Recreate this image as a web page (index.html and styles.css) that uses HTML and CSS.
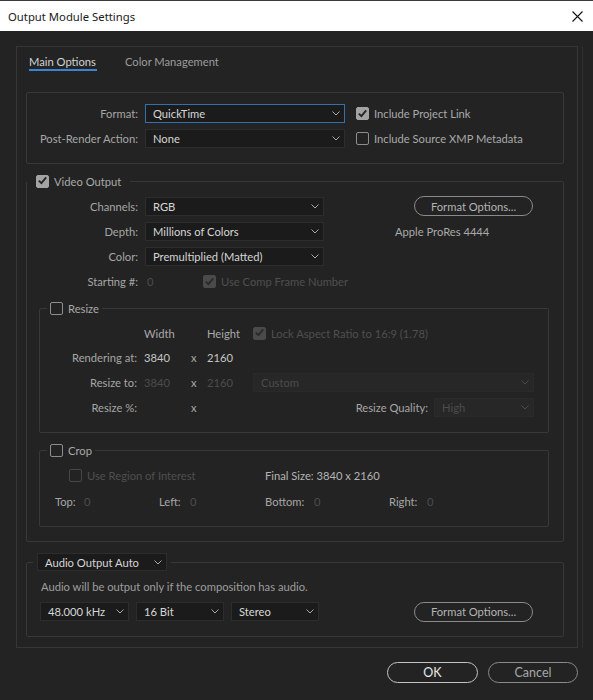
FILE: index.html
```html
<!DOCTYPE html>
<html>
<head>
<meta charset="utf-8">
<link rel="stylesheet" href="styles.css">
</head>
<body>
<div class="titlebar">
  <span class="title">Output Module Settings</span>
  <svg class="close" width="11" height="11" viewBox="0 0 11 11"><path d="M0.5 0.5 L10.5 10.5 M10.5 0.5 L0.5 10.5" stroke="#111" stroke-width="1.1" fill="none"/></svg>
</div>
<div class="main">
  <div class="frame">
    <div class="panel">
      <div class="tabs">
        <span class="tab active">Main Options</span>
        <span class="tab">Color Management</span>
      </div>

      <div class="group fmt">
        <div class="row">
          <span class="lbl">Format:</span>
          <div class="dd w200 focus"><span>QuickTime</span><svg width="8" height="5" viewBox="0 0 8 5"><polyline points="0.5,0.5 4,4 7.5,0.5" fill="none" stroke="#a8a8a8" stroke-width="1"/></svg></div>
          <span class="cb on ml11"><svg width="13" height="13" viewBox="0 0 13 13"><polyline points="2.8,6.6 5.4,9.2 10.2,3.4" fill="none" stroke="#262626" stroke-width="1.9"/></svg></span>
          <span class="cbtext">Include Project Link</span>
        </div>
        <div class="row">
          <span class="lbl">Post-Render Action:</span>
          <div class="dd w200"><span>None</span><svg width="8" height="5" viewBox="0 0 8 5"><polyline points="0.5,0.5 4,4 7.5,0.5" fill="none" stroke="#a8a8a8" stroke-width="1"/></svg></div>
          <span class="cb ml11"></span>
          <span class="cbtext">Include Source XMP Metadata</span>
        </div>
      </div>

      <fieldset class="group video">
        <legend class="lg-video"><span class="cb on"><svg width="13" height="13" viewBox="0 0 13 13"><polyline points="2.8,6.6 5.4,9.2 10.2,3.4" fill="none" stroke="#262626" stroke-width="1.9"/></svg></span><span class="cbtext">Video Output</span></legend>
        <div class="vcontent">
          <div class="row">
            <span class="lbl">Channels:</span>
            <div class="dd w179"><span>RGB</span><svg width="8" height="5" viewBox="0 0 8 5"><polyline points="0.5,0.5 4,4 7.5,0.5" fill="none" stroke="#a8a8a8" stroke-width="1"/></svg></div>
            <div class="rcell"><span class="pill fo">Format Options...</span></div>
          </div>
          <div class="row">
            <span class="lbl">Depth:</span>
            <div class="dd w179"><span>Millions of Colors</span><svg width="8" height="5" viewBox="0 0 8 5"><polyline points="0.5,0.5 4,4 7.5,0.5" fill="none" stroke="#a8a8a8" stroke-width="1"/></svg></div>
            <div class="rcell codec">Apple ProRes 4444</div>
          </div>
          <div class="row">
            <span class="lbl">Color:</span>
            <div class="dd w179"><span>Premultiplied (Matted)</span><svg width="8" height="5" viewBox="0 0 8 5"><polyline points="0.5,0.5 4,4 7.5,0.5" fill="none" stroke="#a8a8a8" stroke-width="1"/></svg></div>
          </div>
          <div class="row">
            <span class="lbl">Starting #:</span>
            <span class="dimval startnum">0</span>
            <span class="cb on dim"><svg width="13" height="13" viewBox="0 0 13 13"><polyline points="2.8,6.6 5.4,9.2 10.2,3.4" fill="none" stroke="#2a2a2a" stroke-width="1.9"/></svg></span>
            <span class="cbtext dimtext">Use Comp Frame Number</span>
          </div>

          <fieldset class="sub resize">
            <legend class="lg-sub"><span class="cb"></span><span class="cbtext">Resize</span></legend>
            <div class="rcontent">
              <div class="row hdr">
                <span class="lbl rl"></span>
                <span class="cw">Width</span>
                <span class="cx"></span>
                <span class="ch">Height</span>
                <span class="cb on dim"><svg width="13" height="13" viewBox="0 0 13 13"><polyline points="2.8,6.6 5.4,9.2 10.2,3.4" fill="none" stroke="#2a2a2a" stroke-width="1.9"/></svg></span>
                <span class="cbtext dimtext">Lock Aspect Ratio to 16:9 (1.78)</span>
              </div>
              <div class="row">
                <span class="lbl rl">Rendering at:</span>
                <span class="cw val">3840</span>
                <span class="cx">x</span>
                <span class="ch val">2160</span>
              </div>
              <div class="row">
                <span class="lbl rl">Resize to:</span>
                <span class="cw dimval">3840</span>
                <span class="cx">x</span>
                <span class="ch dimval">2160</span>
                <div class="dd dis grow"><span>Custom</span><svg width="8" height="5" viewBox="0 0 8 5"><polyline points="0.5,0.5 4,4 7.5,0.5" fill="none" stroke="#4a4a4a" stroke-width="1"/></svg></div>
              </div>
              <div class="row">
                <span class="lbl rl">Resize %:</span>
                <span class="cw"></span>
                <span class="cx">x</span>
                <span class="ch"></span>
                <span class="rq">Resize Quality:</span>
                <div class="dd dis w100"><span>High</span><svg width="8" height="5" viewBox="0 0 8 5"><polyline points="0.5,0.5 4,4 7.5,0.5" fill="none" stroke="#4a4a4a" stroke-width="1"/></svg></div>
              </div>
            </div>
          </fieldset>

          <fieldset class="sub crop">
            <legend class="lg-sub"><span class="cb"></span><span class="cbtext">Crop</span></legend>
            <div class="ccontent">
              <div class="row roi">
                <div class="roiitem"><span class="cb dim"></span><span class="cbtext dimtext">Use Region of Interest</span></div>
                <span class="val2">Final Size: 3840 x 2160</span>
              </div>
              <div class="row edges">
                <div class="edge e-top"><span class="el">Top:</span><span class="dimval">0</span></div>
                <div class="edge e-left"><span class="el">Left:</span><span class="dimval">0</span></div>
                <div class="edge e-bottom"><span class="el">Bottom:</span><span class="dimval">0</span></div>
                <div class="edge e-right"><span class="el">Right:</span><span class="dimval">0</span></div>
              </div>
            </div>
          </fieldset>
        </div>
      </fieldset>

      <fieldset class="group audio">
        <legend class="lg-audio"><div class="dd w130 h18"><span>Audio Output Auto</span><svg width="8" height="5" viewBox="0 0 8 5"><polyline points="0.5,0.5 4,4 7.5,0.5" fill="none" stroke="#a8a8a8" stroke-width="1"/></svg></div></legend>
        <div class="acontent">
          <div class="anote">Audio will be output only if the composition has audio.</div>
          <div class="row arow">
            <div class="dd w89"><span>48.000 kHz</span><svg width="8" height="5" viewBox="0 0 8 5"><polyline points="0.5,0.5 4,4 7.5,0.5" fill="none" stroke="#a8a8a8" stroke-width="1"/></svg></div>
            <div class="dd w88"><span>16 Bit</span><svg width="8" height="5" viewBox="0 0 8 5"><polyline points="0.5,0.5 4,4 7.5,0.5" fill="none" stroke="#a8a8a8" stroke-width="1"/></svg></div>
            <div class="dd w88"><span>Stereo</span><svg width="8" height="5" viewBox="0 0 8 5"><polyline points="0.5,0.5 4,4 7.5,0.5" fill="none" stroke="#a8a8a8" stroke-width="1"/></svg></div>
            <span class="pill afo">Format Options...</span>
          </div>
        </div>
      </fieldset>
    </div>
  </div>
  <div class="buttons">
    <span class="btn ok">OK</span>
    <span class="btn cancel">Cancel</span>
  </div>
</div>
</body>
</html>
```

FILE: styles.css
```css
* { box-sizing: border-box; }

html, body {
  margin: 0;
  padding: 0;
}

body {
  width: 593px;
  height: 700px;
  overflow: hidden;
  background: #232323;
  font-family: Lato, "Liberation Sans", sans-serif;
  font-size: 11.2px;
  line-height: 15px;
  color: #a9a9a9;
}

.titlebar {
  height: 31px;
  background: #ffffff;
  border-top: 1px solid #3a3a3a;
  display: flex;
  align-items: center;
  justify-content: space-between;
  padding: 0 10px 0 8px;
}

.title {
  font-family: "Noto Sans", "Open Sans", sans-serif;
  font-size: 11.3px;
  color: #1a1a1a;
}

.main {
  padding-top: 15px;
}

.frame {
  margin-left: 16px;
  width: 567px;
  padding-right: 4px;
  border-right: 1px solid #2f2f2f;
}

.panel {
  border: 1px solid #363636;
  padding: 7px 13px 10px 9px;
}

.tabs {
  display: flex;
  gap: 28px;
  margin-left: 3px;
}

.tab {
  line-height: 15px;
  border-bottom: 2px solid transparent;
  color: #9c9c9c;
}

.tab.active {
  color: #d2d2d2;
  border-bottom-color: #3a82d2;
  padding-right: 1px;
}

.group {
  border: 1px solid #383838;
  border-radius: 2px;
}

.fmt {
  margin-top: 21px;
  padding: 11px 0 15px 0;
}

.row {
  display: flex;
  align-items: center;
  height: 19px;
}

.row + .row {
  margin-top: 6px;
}

.lbl {
  flex: none;
  width: 111px;
  margin-right: 7px;
  text-align: right;
  white-space: nowrap;
  color: #a6a6a6;
}

.lbl.rl {
  width: 97px;
}

.dd {
  flex: none;
  display: flex;
  align-items: center;
  justify-content: space-between;
  height: 19px;
  background: #1b1b1b;
  border: 1px solid #2d2d2d;
  padding: 0 4px 0 7px;
  color: #d6d6d6;
  white-space: nowrap;
}

.dd.focus {
  border-color: #3570ab;
}

.dd.dis {
  background: #272727;
  border-color: #2a2a2a;
  color: #4c4c4c;
}

.dd.grow {
  flex: 1;
}

.w200 { width: 200px; }
.w179 { width: 179px; }
.w130 { width: 130px; }
.w100 { width: 100px; }
.w89 { width: 89px; }
.w88 { width: 88px; }
.h18 { height: 18px; }

.cb {
  flex: none;
  display: inline-block;
  width: 13px;
  height: 13px;
  border: 1.5px solid #8d8d8d;
  border-radius: 2px;
}

.cb svg {
  display: block;
  margin: -1.5px;
}

.cb.on {
  background: #a3a3a3;
  border-color: #a3a3a3;
}

.cb.dim {
  border-color: #474747;
}

.cb.on.dim {
  background: #4a4a4a;
  border-color: #4a4a4a;
}

.ml11 {
  margin-left: 11px;
}

.cbtext {
  margin-left: 5px;
  white-space: nowrap;
  color: #a9a9a9;
}

.dimtext {
  color: #4f4f4f;
}

.dimval {
  color: #4c4c4c;
}

.val {
  color: #c6c6c6;
}

.val2 {
  color: #b4b4b4;
}

/* Fieldsets */
fieldset {
  margin: 0;
  padding: 0;
  min-width: 0;
}

legend {
  padding: 0;
}

.video {
  margin-top: 9px;
}

.lg-video {
  display: flex;
  align-items: center;
  height: 16px;
  padding: 0 9px 0 9px;
}

.vcontent {
  padding: 8px 0 14px 0;
}

.rcell {
  margin-left: 71px;
}

.fo {
  margin-left: 19px;
  margin-top: -1px;
}

.codec {
  color: #a9a9a9;
}

.startnum {
  width: 58px;
  padding-left: 2px;
}

.sub {
  border: 1px solid #383838;
  border-radius: 2px;
  margin: 9px 14px 0 12px;
}

.lg-sub {
  display: flex;
  align-items: center;
  height: 16px;
  margin-left: 7px;
  padding: 0 3px;
}

.rcontent {
  padding: 8px 14px 15px 0;
}

.row.hdr {
  height: 18px;
}

.cw {
  flex: none;
  width: 47px;
  white-space: nowrap;
}

.cx {
  flex: none;
  width: 16px;
  color: #a9a9a9;
}

.ch {
  flex: none;
  width: 46px;
  white-space: nowrap;
}

.rq {
  margin-left: auto;
  margin-right: 6px;
  color: #a6a6a6;
}

.ccontent {
  padding: 8px 14px 15px 0;
}

.ccontent .row + .row {
  margin-top: 7px;
}

.roi {
  padding-left: 29px;
}

.roiitem {
  flex: none;
  width: 196px;
  display: flex;
  align-items: center;
}

.edges {
  padding-left: 15px;
}

.edge {
  flex: none;
  display: flex;
}

.e-top { width: 104px; }
.e-left { width: 106px; }
.e-bottom { width: 124px; }

.e-top .el { width: 29px; }
.e-left .el { width: 31px; }
.e-bottom .el { width: 49px; }
.e-right .el { width: 38px; }

.el {
  flex: none;
  color: #a6a6a6;
}

.audio {
  margin-top: 11px;
}

.lg-audio {
  margin-left: 6px;
  padding: 0 4px;
}

.lg-audio .dd {
  color: #d6d6d6;
}

.acontent {
  padding: 8px 0 15px 0;
}

.anote {
  padding-left: 14px;
  color: #9e9e9e;
  white-space: nowrap;
}

.arow {
  margin-top: 8px;
  padding-left: 13px;
  gap: 7px;
}

.pill {
  flex: none;
  display: flex;
  align-items: center;
  justify-content: center;
  width: 119px;
  height: 20px;
  border: 1px solid #8a8a8a;
  border-radius: 10px;
  color: #b3b3b3;
  white-space: nowrap;
}

.afo {
  margin-left: 88px;
}

.buttons {
  display: flex;
  justify-content: flex-end;
  gap: 10px;
  padding-right: 15px;
  margin-top: 14px;
}

.btn {
  display: flex;
  align-items: center;
  justify-content: center;
  height: 21px;
  border: 1px solid #8a8a8a;
  border-radius: 11px;
  color: #a8a8a8;
  font-size: 12.5px;
}

.btn.ok {
  width: 91px;
  border-color: #c4c4c4;
  color: #e8e8e8;
}

.btn.cancel {
  width: 90px;
}
```
